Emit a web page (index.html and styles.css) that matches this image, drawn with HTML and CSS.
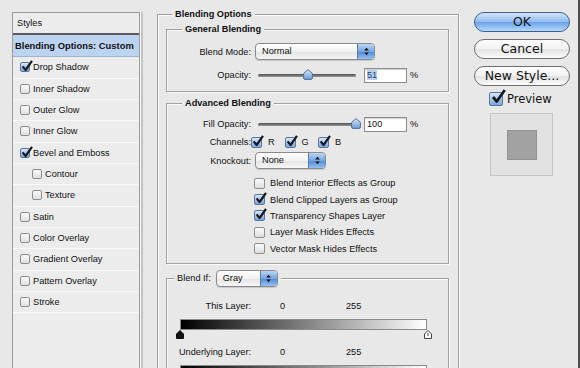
FILE: index.html
```html
<!DOCTYPE html>
<html lang="en">
<head>
  <meta charset="UTF-8" />
  <title>Layer Style</title>
  <link rel="stylesheet" href="styles.css">
</head>
<body>
  <svg class="defs" width="0" height="0">
    <defs>
      <linearGradient id="thumb-fill" x1="0" y1="0" x2="0" y2="1">
        <stop offset="0" stop-color="#d9e7f8" />
        <stop offset="1" stop-color="#6d9bd4" />
      </linearGradient>
      <symbol id="check" viewBox="0 0 12 12">
        <path d="M1.6 6.4 L4.6 10 L11 0.8" fill="none" stroke="#151a22" stroke-width="2.2" stroke-linejoin="round" />
      </symbol>
      <symbol id="updown" viewBox="0 0 6 10">
        <path d="M3 0.5 L5.8 3.8 H0.2 Z M0.2 6.2 H5.8 L3 9.5 Z" fill="#111" />
      </symbol>
      <symbol id="thumb" viewBox="0 0 10 11">
        <path d="M5 0.6 L9.4 4.4 V9 Q9.4 10.4 8 10.4 H2 Q0.6 10.4 0.6 9 V4.4 Z" fill="url(#thumb-fill)" stroke="#4f6e9b" stroke-width="1" />
      </symbol>
    </defs>
  </svg>

  <div class="dialog">
    <div class="styles-list">
      <div class="list-head">Styles</div>
      <div class="list-item selected">Blending Options: Custom</div>
      <div class="list-item"><span class="cb on"><svg><use href="#check"/></svg></span>Drop Shadow</div>
      <div class="list-item"><span class="cb"></span>Inner Shadow</div>
      <div class="list-item"><span class="cb"></span>Outer Glow</div>
      <div class="list-item"><span class="cb"></span>Inner Glow</div>
      <div class="list-item"><span class="cb on"><svg><use href="#check"/></svg></span>Bevel and Emboss</div>
      <div class="list-item sub"><span class="cb"></span>Contour</div>
      <div class="list-item sub"><span class="cb"></span>Texture</div>
      <div class="list-item"><span class="cb"></span>Satin</div>
      <div class="list-item"><span class="cb"></span>Color Overlay</div>
      <div class="list-item"><span class="cb"></span>Gradient Overlay</div>
      <div class="list-item"><span class="cb"></span>Pattern Overlay</div>
      <div class="list-item"><span class="cb"></span>Stroke</div>
    </div>

    <div class="main">
      <fieldset class="group outer">
        <legend>Blending Options</legend>

        <fieldset class="group general">
          <legend>General Blending</legend>
          <div class="row row-mode">
            <span class="lbl">Blend Mode:</span>
            <div class="popup popup-mode"><span class="popup-text">Normal</span><span class="stepper"><svg><use href="#updown"/></svg></span></div>
          </div>
          <div class="row row-opacity">
            <span class="lbl">Opacity:</span>
            <div class="slider"><div class="track"></div><svg class="thumb" style="left: 51%"><use href="#thumb"/></svg></div>
            <span class="field"><span class="sel">51</span></span>
            <span class="pct">%</span>
          </div>
        </fieldset>

        <fieldset class="group advanced">
          <legend>Advanced Blending</legend>
          <div class="row">
            <span class="lbl">Fill Opacity:</span>
            <div class="slider"><div class="track"></div><svg class="thumb" style="left: 100%"><use href="#thumb"/></svg></div>
            <span class="field">100</span>
            <span class="pct">%</span>
          </div>
          <div class="row row-channels">
            <span class="lbl">Channels:</span>
            <span class="chan"><span class="cb md on"><svg><use href="#check"/></svg></span>R</span>
            <span class="chan"><span class="cb md on"><svg><use href="#check"/></svg></span>G</span>
            <span class="chan"><span class="cb md on"><svg><use href="#check"/></svg></span>B</span>
          </div>
          <div class="row row-knockout">
            <span class="lbl">Knockout:</span>
            <div class="popup popup-knockout"><span class="popup-text">None</span><span class="stepper"><svg><use href="#updown"/></svg></span></div>
          </div>
          <div class="options">
            <div class="opt"><span class="cb md"></span>Blend Interior Effects as Group</div>
            <div class="opt"><span class="cb md on"><svg><use href="#check"/></svg></span>Blend Clipped Layers as Group</div>
            <div class="opt"><span class="cb md on"><svg><use href="#check"/></svg></span>Transparency Shapes Layer</div>
            <div class="opt"><span class="cb md"></span>Layer Mask Hides Effects</div>
            <div class="opt"><span class="cb md"></span>Vector Mask Hides Effects</div>
          </div>
        </fieldset>

        <fieldset class="group blend-if">
          <legend>Blend If:<div class="popup popup-gray"><span class="popup-text">Gray</span><span class="stepper"><svg><use href="#updown"/></svg></span></div></legend>
          <div class="range-row first">
            <span class="lbl">This Layer:</span>
            <span class="val-low">0</span>
            <span class="val-high">255</span>
          </div>
          <div class="ramp"></div>
          <div class="markers">
            <svg class="marker"><path d="M4 0.5 L7.5 4 V8.5 H0.5 V4 Z" fill="#111" stroke="#111" /></svg>
            <svg class="marker"><path d="M4 0.5 L7.5 4 V8.5 H0.5 V4 Z" fill="#fff" stroke="#444" /><path d="M4 3 V6" stroke="#444" /></svg>
          </div>
          <div class="range-row">
            <span class="lbl">Underlying Layer:</span>
            <span class="val-low">0</span>
            <span class="val-high">255</span>
          </div>
          <div class="ramp"></div>
        </fieldset>
      </fieldset>
    </div>

    <div class="side">
      <button class="btn btn-ok">OK</button>
      <button class="btn">Cancel</button>
      <button class="btn">New Style...</button>
      <div class="preview-row"><span class="cb big on"><svg><use href="#check"/></svg></span>Preview</div>
      <div class="swatch"><div class="swatch-inner"></div></div>
    </div>
  </div>
</body>
</html>
```

FILE: styles.css
```css
body {
  margin: 0;
  background: #4d4d4d;
  font-family: "Liberation Sans", Arial, sans-serif;
  font-size: 9.2px;
  color: #111;
}
.defs {
  position: absolute;
}
.dialog {
  width: 578px;
  height: 368px;
  overflow: hidden;
  background: #e8e8e8;
  display: flex;
  align-items: flex-start;
}

/* styles list */
.styles-list {
  margin: 12px 0 0 12px;
  width: 128px;
  height: 400px;
  box-sizing: border-box;
  border: 1px solid #9a9a9a;
  background: #ececec;
  box-shadow: 1px 0 0 #fafafa, 3px 0 0 #c2c2c2;
  flex: none;
}
.list-head {
  height: 20px;
  line-height: 20px;
  padding-left: 4px;
  border-bottom: 2px solid #5a5a5a;
}
.list-item {
  height: 20.33px;
  display: flex;
  align-items: center;
  gap: 3px;
  padding-left: 7px;
  border-bottom: 1px solid #f9f9f9;
}
.list-item.selected {
  height: 21.3px;
  padding-left: 2px;
  background: #bcd4f1;
  border-bottom-color: #9fb5d3;
  font-weight: bold;
  font-size: 9.4px;
}
.list-item.sub {
  padding-left: 19px;
}

/* checkboxes */
.cb {
  position: relative;
  display: inline-block;
  flex: none;
  width: 10px;
  height: 10px;
  box-sizing: border-box;
  border: 1px solid #8e8e8e;
  border-radius: 2px;
  background: linear-gradient(#fbfbfb, #dedede);
}
.cb.md {
  width: 11px;
  height: 11px;
}
.cb.on {
  background: linear-gradient(#d8e7f8, #7aa5da);
  border-color: #58769f;
}
.cb svg {
  position: absolute;
  left: 0;
  top: -3px;
  width: 12px;
  height: 12px;
  overflow: visible;
}
.cb.big {
  width: 14px;
  height: 14px;
}
.cb.big svg {
  left: 1px;
  top: -4px;
  width: 15px;
  height: 15px;
}

/* group boxes */
.main {
  margin: 8px 0 0 17px;
  width: 302px;
  flex: none;
}
.group {
  margin: 0;
  min-width: 0;
  border: 1px solid #a0a0a0;
  box-shadow: inset 1px 1px 0 #fafafa, 1px 1px 0 #fafafa;
}
.group legend {
  font-weight: bold;
  line-height: 12px;
  padding: 0 3px;
  background: #e8e8e8;
}
.outer {
  height: 420px;
  box-sizing: border-box;
  padding: 3px 9px 0 8px;
}
.outer > legend {
  margin-left: 6px;
}
.general {
  padding: 8px 0;
}
.general > legend,
.advanced > legend {
  margin-left: 15px;
}
.advanced {
  margin-top: 5px;
  padding: 7px 0 6px;
}
.blend-if {
  margin-top: 6px;
  padding: 12px 0 40px;
}
.blend-if > legend {
  display: flex;
  align-items: center;
  margin-left: 7px;
  font-weight: normal;
}

/* rows */
.row {
  display: flex;
  align-items: center;
  height: 16px;
}
.row + .row {
  margin-top: 2px;
}
.general .row + .row {
  margin-top: 7px;
}
.row-mode,
.row-knockout {
  height: 17px;
}
.lbl {
  width: 84px;
  flex: none;
  text-align: right;
}

/* popup menus */
.popup {
  display: flex;
  height: 17px;
  box-sizing: border-box;
  margin-left: 4px;
  border: 1px solid #8a8a8a;
  border-radius: 4px;
  overflow: hidden;
  background: linear-gradient(#ffffff, #f1f1f1 50%, #e3e3e3 51%, #f6f6f6);
  box-shadow: 0 1px 1px rgba(0, 0, 0, 0.15);
}
.popup-mode {
  width: 120px;
}
.popup-knockout {
  width: 71px;
}
.popup-gray {
  width: 62px;
  margin-left: 5px;
  font-weight: normal;
}
.popup-text {
  flex: 1;
  padding-left: 6px;
  line-height: 15px;
}
.stepper {
  width: 16px;
  display: flex;
  align-items: center;
  justify-content: center;
  border-left: 1px solid #5d7aa6;
  background: linear-gradient(#bcd5f4, #76a5e2 50%, #4f89d8 51%, #94c1f2);
}
.stepper svg {
  width: 5px;
  height: 9px;
}

/* sliders and fields */
.slider {
  position: relative;
  width: 98px;
  height: 16px;
  margin-left: 7px;
  flex: none;
}
.track {
  margin-top: 7px;
  height: 3px;
  border-radius: 2px;
  background: linear-gradient(#4e4e4e, #9a9a9a);
}
.thumb {
  position: absolute;
  top: 2px;
  width: 10px;
  height: 11px;
  transform: translateX(-50%);
}
.field {
  width: 43px;
  height: 15px;
  box-sizing: border-box;
  margin-left: 8px;
  padding-left: 2px;
  line-height: 13px;
  border: 1px solid #8d8d8d;
  background: #fff;
  box-shadow: inset 0 1px 1px rgba(0, 0, 0, 0.2);
}
.sel {
  background: #b7d0ee;
  color: #1e3f73;
}
.pct {
  margin-left: 3px;
}

/* channels and options */
.chan {
  width: 33.5px;
  display: flex;
  align-items: center;
  gap: 6px;
}
.chan:first-of-type {
  margin-left: 3px;
}
.options {
  margin-top: 6px;
}
.opt {
  height: 16.4px;
  display: flex;
  align-items: center;
  gap: 5px;
  padding-left: 87px;
}

/* blend if */
.range-row {
  display: flex;
  align-items: center;
  height: 14px;
  margin-top: 6px;
}
.range-row.first {
  margin-top: 0;
}
.val-low {
  margin-left: 29px;
  width: 66px;
}
.ramp {
  margin: 6px 0 0 13px;
  width: 247px;
  height: 11px;
  box-sizing: border-box;
  border: 1px solid #8a8a8a;
  background: linear-gradient(to right, #000, #fff);
}
.markers {
  display: flex;
  justify-content: space-between;
  width: 256px;
  height: 9px;
  margin-left: 9px;
}
.marker {
  width: 8px;
  height: 9px;
}

/* buttons and preview */
.side {
  margin: 12px 0 0 15px;
  width: 96px;
  flex: none;
}
.btn {
  display: block;
  width: 96px;
  height: 20px;
  padding: 0;
  border: 1px solid #6e6e6e;
  border-radius: 10px;
  background: linear-gradient(#fdfdfd, #f2f2f2 50%, #e2e2e2 51%, #fbfbfb);
  font-family: "DejaVu Sans", sans-serif;
  font-size: 12.5px;
  line-height: 18px;
  color: #111;
}
.btn + .btn {
  margin-top: 7px;
}
.btn-ok {
  border-color: #3f5e91;
  background: linear-gradient(#d3e5fa, #8fbaee 50%, #6aa3e9 51%, #b4d8fb);
}
.preview-row {
  display: flex;
  align-items: center;
  gap: 4px;
  height: 14px;
  margin: 6px 0 0 15px;
  font-family: "DejaVu Sans", sans-serif;
  font-size: 11.5px;
}
.swatch {
  width: 63px;
  height: 63px;
  box-sizing: border-box;
  margin: 7px 0 0 16px;
  border: 1px solid #c4c4c4;
  background: #e2e2e2;
  display: flex;
  align-items: center;
  justify-content: center;
}
.swatch-inner {
  width: 30px;
  height: 30px;
  box-sizing: border-box;
  border: 1px solid #929292;
  background: #a2a2a2;
}
```
